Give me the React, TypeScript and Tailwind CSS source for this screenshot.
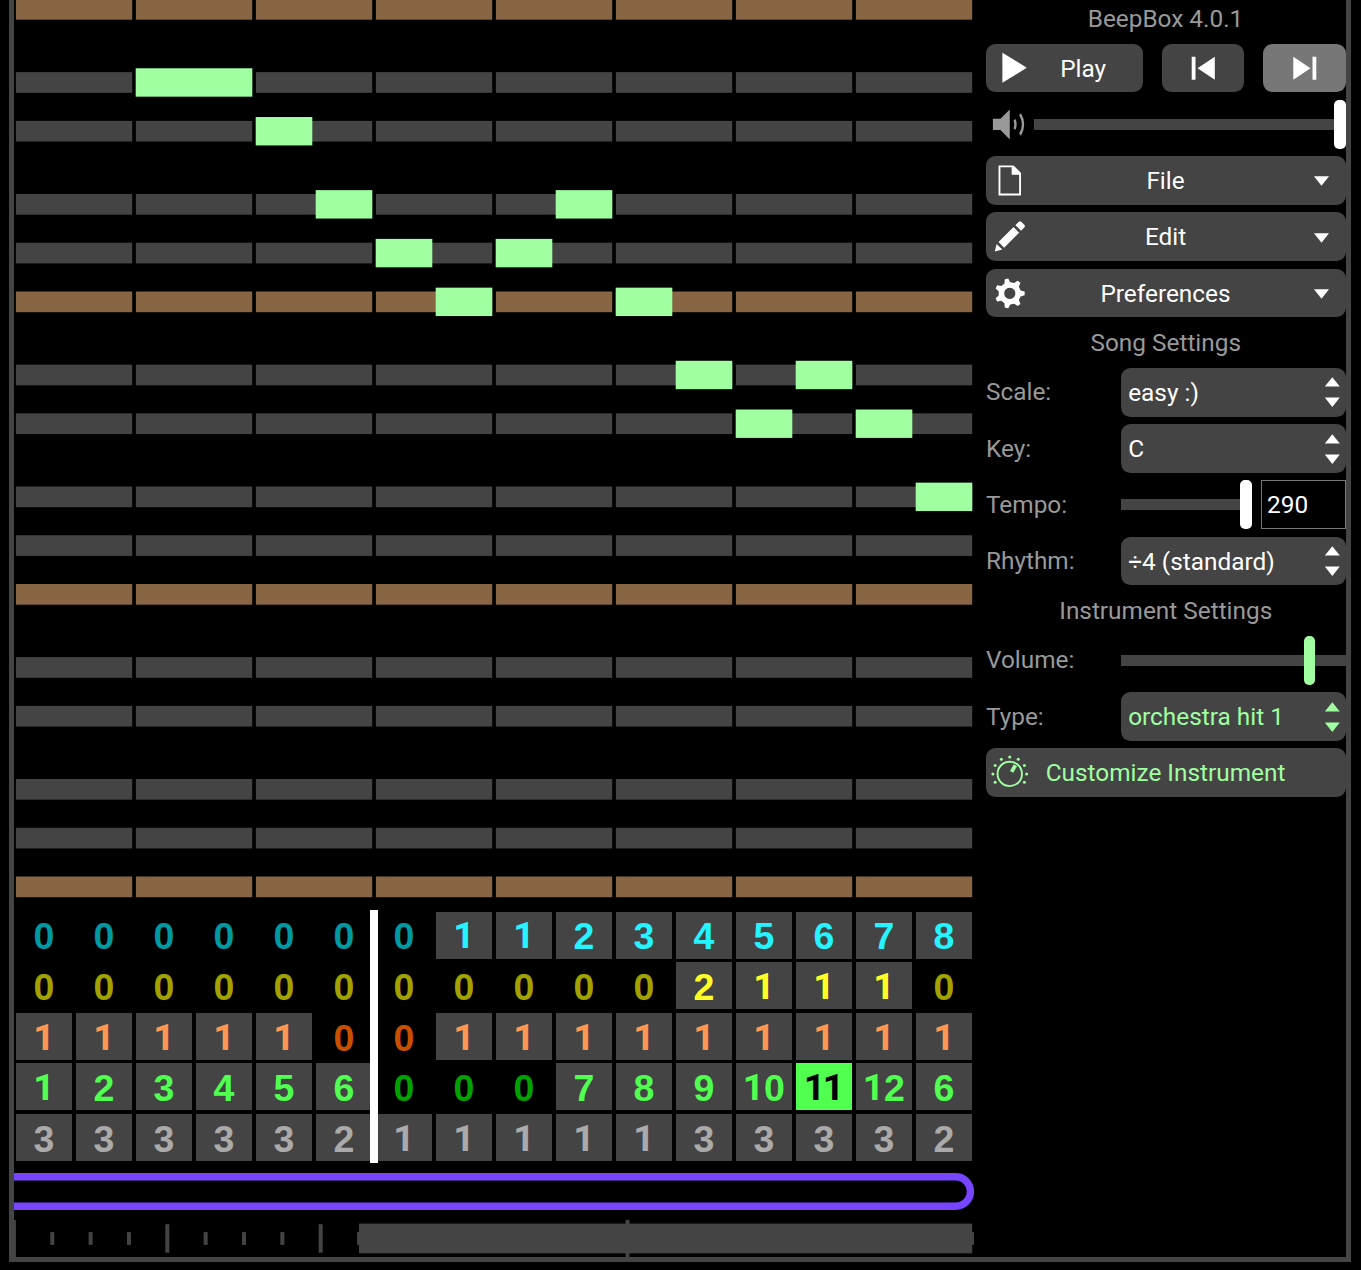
import type { ReactNode } from "react";

const ROW = 24.375;
const ROLL_TOP = 9.35;

/* Rows counted in semitones below the top visible C. */
const scaleRows = [0, 3, 5, 8, 10, 12, 15, 17, 20, 22, 24, 27, 29, 32, 34, 36];

const notes: { x: number; w: number; row: number }[] = [
  { x: 2, w: 2, row: 3 },
  { x: 4, w: 1, row: 5 },
  { x: 5, w: 1, row: 8 },
  { x: 6, w: 1, row: 10 },
  { x: 7, w: 1, row: 12 },
  { x: 8, w: 1, row: 10 },
  { x: 9, w: 1, row: 8 },
  { x: 10, w: 1, row: 12 },
  { x: 11, w: 1, row: 15 },
  { x: 12, w: 1, row: 17 },
  { x: 13, w: 1, row: 15 },
  { x: 14, w: 1, row: 17 },
  { x: 15, w: 1, row: 20 },
];

const channels: { bright: string; dim: string; selected: string; bars: number[] }[] = [
  { bright: "text-[#25f3ff]", dim: "text-[#0099a1]", selected: "bg-[#25f3ff]", bars: [0, 0, 0, 0, 0, 0, 0, 1, 1, 2, 3, 4, 5, 6, 7, 8] },
  { bright: "text-[#ffff25]", dim: "text-[#a1a100]", selected: "bg-[#ffff25]", bars: [0, 0, 0, 0, 0, 0, 0, 0, 0, 0, 0, 2, 1, 1, 1, 0] },
  { bright: "text-[#ff9752]", dim: "text-[#c75000]", selected: "bg-[#ff9752]", bars: [1, 1, 1, 1, 1, 0, 0, 1, 1, 1, 1, 1, 1, 1, 1, 1] },
  { bright: "text-[#50ff50]", dim: "text-[#00a100]", selected: "bg-[#50ff50]", bars: [1, 2, 3, 4, 5, 6, 0, 0, 0, 7, 8, 9, 10, 11, 12, 6] },
  { bright: "text-[#aaaaaa]", dim: "text-[#6f6f6f]", selected: "bg-[#aaaaaa]", bars: [3, 3, 3, 3, 3, 2, 1, 1, 1, 1, 1, 3, 3, 3, 3, 2] },
];

const selected = { channel: 3, bar: 13 };

function PianoRoll() {
  return (
    <svg className="block h-[910px] w-[960px]" viewBox="0 0 960 910">
      {scaleRows.map((row) =>
        Array.from({ length: 8 }, (_, beat) => (
          <rect
            key={`${row}-${beat}`}
            x={beat * 120 + 1.9}
            y={ROLL_TOP + row * ROW - 10.35}
            width={116.3}
            height={20.7}
            fill={row % 12 === 0 ? "#886644" : "#444444"}
          />
        )),
      )}
      {notes.map((n) => (
        <rect
          key={n.x}
          x={n.x * 60 + 1.7}
          y={ROLL_TOP + n.row * ROW - 14.2}
          width={n.w * 60 - 3.4}
          height={28.4}
          fill="#a0ffa0"
        />
      ))}
    </svg>
  );
}

/* The numeral one uses a face without a foot serif. */
function PatternNumber({ value }: { value: number }) {
  return (
    <span className={`flex ${value === 11 ? "-space-x-[2px]" : ""}`}>
      {String(value)
        .split("")
        .map((digit, i) => (
          <span
            key={i}
            className={`flex w-[20.86px] justify-center ${digit === "1" ? "-mt-[1px] [font-family:Roboto,sans-serif]" : ""}`}
          >
            {digit}
          </span>
        ))}
    </span>
  );
}

function TrackGrid() {
  return (
    <div className="relative h-[260px] pt-[1.7px]">
      {channels.map((channel, c) => (
        <div key={c} className="grid h-[50.6px] grid-cols-[repeat(16,60px)]">
          {channel.bars.map((value, b) => {
            const isSelected = selected.channel === c && selected.bar === b;
            const background = isSelected ? channel.selected : value > 0 ? "bg-[#444444]" : "";
            const color = isSelected ? "text-black" : value > 0 ? channel.bright : channel.dim;
            return (
              <div
                key={b}
                className={`mx-[2px] flex h-[47px] items-start justify-center pt-[6.75px] text-[37.5px] leading-none font-bold [font-family:'Liberation_Sans',Arial,sans-serif] ${background} ${color}`}
              >
                <PatternNumber value={value} />
              </div>
            );
          })}
        </div>
      ))}
      <div className="absolute top-0 left-[356px] h-[253px] w-[8px] bg-white" />
    </div>
  );
}

function LoopBar() {
  return (
    <svg className="block h-[50px] w-[960px]" viewBox="0 1170 960 50">
      <path
        d="M -20 1176.7 L 941.6 1176.7 A 14.8 14.8 0 0 1 941.6 1206.3 L -20 1206.3"
        fill="none"
        stroke="#7744ff"
        strokeWidth="7.4"
      />
    </svg>
  );
}

function ScrollBar() {
  return (
    <svg className="block h-[37px] w-[960px]" viewBox="0 0 960 37">
      {Array.from({ length: 26 }, (_, i) => {
        const half = i % 16 === 0 ? 19 : i % 4 === 0 ? 14.3 : 6.4;
        return <rect key={i} x={i * 38.35 - 2.1} y={18.5 - half} width={4} height={half * 2} fill="#444444" />;
      })}
      <rect x="345" y="3.6" width="613.2" height="29.7" fill="#444444" />
    </svg>
  );
}

function Icon({ viewBox = "-5 -21 26 26", className = "", children }: { viewBox?: string; className?: string; children: ReactNode }) {
  return (
    <svg className={`block h-[48.75px] w-[48.75px] shrink-0 -translate-x-[0.6px] ${className}`} viewBox={viewBox} fill="currentColor">
      {children}
    </svg>
  );
}

function MenuButton({ label, icon }: { label: string; icon: ReactNode }) {
  return (
    <button className="grid h-[48.75px] w-full grid-cols-[49px_1fr_49px] items-center rounded-[9.4px] bg-[#444444] text-white">
      {icon}
      <span className="pt-[0.98px] pr-[1px]">{label}</span>
      <svg className="mt-[1.8px] h-[10px] w-[15px] justify-self-center" viewBox="0 0 15 10" fill="currentColor">
        <path d="M0 0.3H15L7.5 9.7z" />
      </svg>
    </button>
  );
}

function Select({ value, className = "text-white" }: { value: string; className?: string }) {
  return (
    <div className={`flex h-full w-[225px] items-center justify-between rounded-[9.4px] bg-[#444444] pr-[6px] pl-[7.2px] ${className}`}>
      <span className="pt-[1.3px]">{value}</span>
      <svg className="h-[30px] w-[15px]" viewBox="0 0 15 30" fill="currentColor">
        <path d="M-0.2 9.6H14.8L7.3 0.2z M-0.2 20.6H14.8L7.3 30z" />
      </svg>
    </div>
  );
}

function Slider({ className, thumb }: { className: string; thumb: string }) {
  return (
    <div className={`relative flex h-full items-center ${className}`}>
      <div className="h-[11px] w-full bg-[#444444]" />
      <div className={`absolute inset-y-0 rounded-[5px] ${thumb}`} />
    </div>
  );
}

function Setting({ label, children }: { label: string; children: ReactNode }) {
  return (
    <div className="flex h-[48.75px] items-center">
      <div className="w-[135px] text-[#999999]">{label}</div>
      {children}
    </div>
  );
}

function Heading({ children }: { children: ReactNode }) {
  return <div className="flex h-[50.5px] items-center justify-center pr-[0.5px] text-[#999999]">{children}</div>;
}

const dialDots = [
  [0, -9],
  [-4.5, -7.8],
  [4.5, -7.8],
  [-7.8, -4.5],
  [7.8, -4.5],
  [-9, 0],
  [9, 0],
  [-7.8, 4.5],
  [7.8, 4.5],
];

function SidePanel() {
  return (
    <aside className="w-[360px] text-[24.375px] leading-[30px] [font-family:Roboto,sans-serif]">
      <div className="flex h-[43.65px] items-center justify-center pr-[1px] pb-[6px] text-[#999999]">BeepBox 4.0.1</div>

      <div className="flex flex-col gap-[7.5px]">
        <div className="flex h-[48.75px] justify-between">
          <button className="flex h-[48px] w-[157px] items-center rounded-[9.4px] bg-[#444444] pl-[2px] text-white">
            <Icon viewBox="-13 -13.2 26 26">
              <path d="M-5 -8V8L8 0z" />
            </Icon>
            <span className="pt-[2px] pl-[23.5px]">Play</span>
          </button>
          <button className="flex h-[48px] w-[82px] items-center justify-center rounded-[9.4px] bg-[#444444] text-white">
            <svg className="h-[24px] w-[24px]" viewBox="0 0 24 24" fill="currentColor">
              <path d="M0.7 0.7H4.5V23.7H0.7z M23.8 0.7V23.7L6.5 12.2z" />
            </svg>
          </button>
          <button className="flex h-[48px] w-[83px] items-center justify-center rounded-[9.4px] bg-[#777777] text-white">
            <svg className="h-[24px] w-[24px]" viewBox="0 0 24 24" fill="currentColor">
              <path d="M23.3 0.7H19.5V23.7H23.3z M0.3 0.7V23.7L17.5 12.2z" />
            </svg>
          </button>
        </div>

        <div className="flex h-[48.75px] items-center">
          <Icon viewBox="0 0 26 26" className="-mr-[0.75px] text-[#999999]">
            <path d="M 4 16 L 4 10 L 8 10 L 13 5 L 13 21 L 8 16 z M 15 11 L 16 10 A 7.2 7.2 0 0 1 16 16 L 15 15 A 5.8 5.8 0 0 0 15 11 z M 18 8 L 19 7 A 11.5 11.5 0 0 1 19 19 L 18 18 A 10.1 10.1 0 0 0 18 8 z" />
          </Icon>
          <Slider className="w-[312px]" thumb="right-0 w-[12px] bg-white" />
        </div>

        <MenuButton
          label="File"
          icon={
            <Icon>
              <path fillRule="evenodd" d="M 2 0 L 2 -16 L 10 -16 L 14 -12 L 14 0 z M 3 -1 L 13 -1 L 13 -11 L 9 -11 L 9 -15 L 3 -15 z" />
            </Icon>
          }
        />
        <MenuButton
          label="Edit"
          icon={
            <Icon>
              <path d="M 0 0 L 1 -4 L 4 -1 z M 2 -5 L 10 -13 L 13 -10 L 5 -2 zM 11 -14 L 13 -16 L 14 -16 L 16 -14 L 16 -13 L 14 -11 z" />
            </Icon>
          }
        />
        <MenuButton
          label="Preferences"
          icon={
            <Icon viewBox="-13 -13 26 26">
              <path
                fillRule="evenodd"
                d="M 5.78 -1.6 L 7.93 -0.94 L 7.93 0.94 L 5.78 1.6 L 4.85 3.53 L 5.68 5.61 L 4.21 6.78 L 2.36 5.52 L 0.27 5.99 L -0.85 7.94 L -2.68 7.52 L -2.84 5.28 L -4.52 3.95 L -6.73 4.28 L -7.55 2.59 L -5.9 1.07 L -5.9 -1.07 L -7.55 -2.59 L -6.73 -4.28 L -4.52 -3.95 L -2.84 -5.28 L -2.68 -7.52 L -0.85 -7.94 L 0.27 -5.99 L 2.36 -5.52 L 4.21 -6.78 L 5.68 -5.61 L 4.85 -3.53 z M 2.92 0.67 L 2.92 -0.67 L 2.35 -1.87 L 1.3 -2.7 L 0 -3 L -1.3 -2.7 L -2.35 -1.87 L -2.92 -0.67 L -2.92 0.67 L -2.35 1.87 L -1.3 2.7 L 0 3 L 1.3 2.7 L 2.35 1.87 z"
              />
            </Icon>
          }
        />
      </div>

      <Heading>Song Settings</Heading>
      <div className="flex flex-col gap-[7.5px]">
        <Setting label="Scale:">
          <Select value="easy :)" />
        </Setting>
        <Setting label="Key:">
          <Select value="C" />
        </Setting>
        <Setting label="Tempo:">
          <Slider className="w-[131px]" thumb="right-0 w-[12px] bg-white" />
          <div className="ml-[9px] flex h-full w-[85px] items-center border border-[#777777] pl-[5px] text-white">290</div>
        </Setting>
        <Setting label="Rhythm:">
          <Select value="÷4 (standard)" />
        </Setting>
      </div>

      <Heading>Instrument Settings</Heading>
      <div className="flex flex-col gap-[7.5px]">
        <Setting label="Volume:">
          <Slider className="w-[225px]" thumb="left-[183px] w-[11px] bg-[#a0ffa0]" />
        </Setting>
        <Setting label="Type:">
          <Select value="orchestra hit 1" className="text-[#a0ffa0]" />
        </Setting>
        <button className="flex h-[48.75px] w-full items-center rounded-[9.4px] bg-[#444444] text-[#a0ffa0]">
          <Icon viewBox="-13 -13.8 26 26">
            <circle r="6.5" fill="none" stroke="currentColor" strokeWidth="1" />
            <path d="M 1 -1.1 L 3 -4.6" stroke="currentColor" strokeWidth="2" />
            {dialDots.map(([x, y]) => (
              <circle key={`${x},${y}`} cx={x} cy={y} r="0.8" />
            ))}
          </Icon>
          <span className="pt-[1px] pl-[11px]">Customize Instrument</span>
        </button>
      </div>
    </aside>
  );
}

export default function App() {
  return (
    <div className="h-[1270px] w-[1361px] overflow-hidden bg-black pl-[9px]">
      <main className="flex h-[1262px] w-[1342px] justify-between border-x-[5px] border-b-[5px] border-[#444444]">
        <section className="w-[960px]">
          <PianoRoll />
          <TrackGrid />
          <LoopBar />
          <ScrollBar />
        </section>
        <SidePanel />
      </main>
    </div>
  );
}
